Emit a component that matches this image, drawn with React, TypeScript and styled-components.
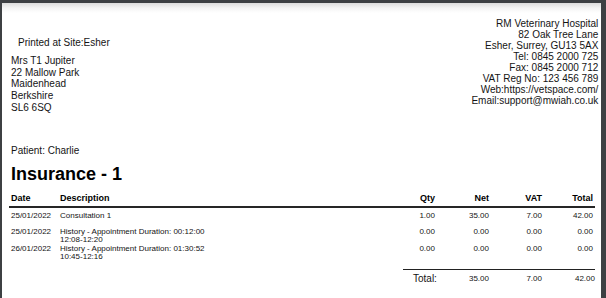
import React from "react";
import styled, { createGlobalStyle } from "styled-components";

const GlobalStyle = createGlobalStyle`
  html, body {
    margin: 0;
    padding: 0;
    height: 100%;
    overflow: hidden;
    background-color: #3d4043;
  }
  body {
    font-family: "Liberation Sans", Arial, sans-serif;
    color: #141414;
  }
`;

const Page = styled.div`
  margin: 3px 0 0 2px;
  width: 599px;
  height: 295px;
  box-sizing: border-box;
  padding: 14.8px 2.7px 0 9px;
  background: linear-gradient(#dcdcdc 0px, #f4f4f4 5px, #ffffff 10px);
`;

const Header = styled.div`
  display: flex;
  justify-content: space-between;
  align-items: flex-start;
`;

const ClientBlock = styled.div`
  font-size: 10px;
`;

const PrintedAt = styled.div`
  margin: 19.5px 0 0 7px;
  line-height: 11.5px;
`;

const Address = styled.div`
  margin-top: 6.1px;
  line-height: 11.67px;
`;

const PracticeBlock = styled.div`
  font-size: 10px;
  line-height: 11px;
  text-align: right;
`;

const PatientLine = styled.div`
  margin-top: 32px;
  font-size: 10px;
  line-height: 11.5px;
`;

const Title = styled.h1`
  margin: 7.5px 0 0;
  font-size: 18px;
  line-height: 20px;
  font-weight: bold;
  color: #000;
`;

const Table = styled.div`
  margin: 8.25px 0 0 -2px;
  width: 586px;
`;

const columns = "51px 325px 50px 54px 53px 53px";

const Row = styled.div`
  display: grid;
  grid-template-columns: ${columns};
  min-height: 16px;
  font-size: 8px;
  line-height: 8.6px;
`;

const HeadRow = styled(Row)`
  min-height: 0;
  font-size: 9px;
  font-weight: bold;
  line-height: 11px;
  padding-bottom: 2.5px;
  border-bottom: 2px solid #262626;
  color: #000;
`;

const Rows = styled.div`
  padding-top: 3.5px;
`;

const Cell = styled.div<{ $num?: boolean; $first?: boolean; $last?: boolean }>`
  text-align: ${(p) => (p.$num ? "right" : "left")};
  padding-left: ${(p) => (p.$first ? "2px" : "0")};
  padding-right: ${(p) => (p.$last ? "2px" : "0")};
  white-space: nowrap;
`;

const TotalRow = styled.div`
  display: grid;
  grid-template-columns: 32px 54px 53px 53px;
  margin: 7.6px 0 0 394px;
  padding-top: 2.5px;
  border-top: 1px solid #222;
  font-size: 8px;
  line-height: 11.5px;
`;

const TotalLabel = styled.div`
  padding-left: 10px;
  font-size: 10px;
  white-space: nowrap;
`;

const TotalValue = styled.div`
  text-align: right;
`;

type Line = {
  date: string;
  description: string[];
  qty: string;
  net: string;
  vat: string;
  total: string;
};

const lines: Line[] = [
  { date: "25/01/2022", description: ["Consultation 1"], qty: "1.00", net: "35.00", vat: "7.00", total: "42.00" },
  {
    date: "25/01/2022",
    description: ["History - Appointment Duration: 00:12:00", "12:08-12:20"],
    qty: "0.00",
    net: "0.00",
    vat: "0.00",
    total: "0.00",
  },
  {
    date: "26/01/2022",
    description: ["History - Appointment Duration: 01:30:52", "10:45-12:16"],
    qty: "0.00",
    net: "0.00",
    vat: "0.00",
    total: "0.00",
  },
];

const practice = [
  "RM Veterinary Hospital",
  "82 Oak Tree Lane",
  "Esher, Surrey, GU13 5AX",
  "Tel: 0845 2000 725",
  "Fax: 0845 2000 712",
  "VAT Reg No: 123 456 789",
  "Web:https://vetspace.com/",
  "Email:support@mwiah.co.uk",
];

const address = ["Mrs T1 Jupiter", "22 Mallow Park", "Maidenhead", "Berkshire", "SL6 6SQ"];

const App: React.FC = () => {
  return (
    <>
      <GlobalStyle />
      <Page>
        <Header>
          <ClientBlock>
            <PrintedAt>Printed at Site:Esher</PrintedAt>
            <Address>
              {address.map((l) => (
                <div key={l}>{l}</div>
              ))}
            </Address>
          </ClientBlock>
          <PracticeBlock>
            {practice.map((l) => (
              <div key={l}>{l}</div>
            ))}
          </PracticeBlock>
        </Header>

        <PatientLine>Patient: Charlie</PatientLine>
        <Title>Insurance - 1</Title>

        <Table>
          <HeadRow>
            <Cell $first>Date</Cell>
            <Cell>Description</Cell>
            <Cell $num>Qty</Cell>
            <Cell $num>Net</Cell>
            <Cell $num>VAT</Cell>
            <Cell $num $last>Total</Cell>
          </HeadRow>
          <Rows>
            {lines.map((line, i) => (
              <Row key={i}>
                <Cell $first>{line.date}</Cell>
                <Cell>
                  {line.description.map((d) => (
                    <div key={d}>{d}</div>
                  ))}
                </Cell>
                <Cell $num>{line.qty}</Cell>
                <Cell $num>{line.net}</Cell>
                <Cell $num>{line.vat}</Cell>
                <Cell $num $last>{line.total}</Cell>
              </Row>
            ))}
          </Rows>
          <TotalRow>
            <TotalLabel>Total:</TotalLabel>
            <TotalValue>35.00</TotalValue>
            <TotalValue>7.00</TotalValue>
            <TotalValue>42.00</TotalValue>
          </TotalRow>
        </Table>
      </Page>
    </>
  );
};

export default App;
